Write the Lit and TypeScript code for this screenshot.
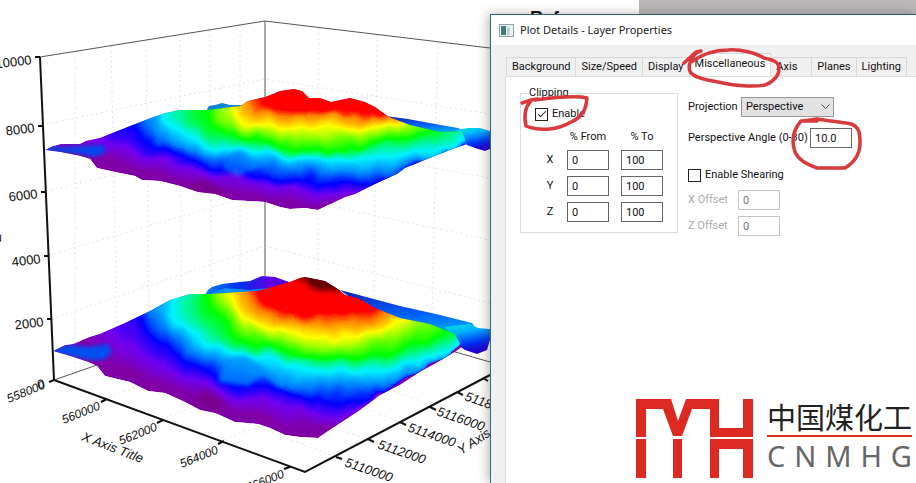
import { LitElement, html, svg, css } from "lit";
import { customElement } from "lit/decorators.js";

type Point = [number, number];
type Rgb = [number, number, number];
interface Level {
  color: Rgb;
  line: Point[];
}

const PURPLE: Rgb = [128, 0, 168];
const VIOLET: Rgb = [112, 0, 240];
const BLUE: Rgb = [0, 0, 255];
const AZURE: Rgb = [0, 128, 255];
const CYAN: Rgb = [0, 240, 255];
const GREEN: Rgb = [0, 255, 0];
const YELLOW: Rgb = [255, 255, 0];
const ORANGE: Rgb = [255, 128, 0];
const RED: Rgb = [255, 0, 0];
const MAROON: Rgb = [100, 0, 0];

// Elevation lines of each surface, from the lowest to the highest, left to right.
const upperLevels: Level[] = [
  { color: PURPLE, line: [[60, 148], [100, 160], [150, 174], [200, 188], [240, 196], [280, 203], [320, 208], [345, 203], [360, 198], [500, 130]] },
  { color: VIOLET, line: [[90, 138], [115, 148], [150, 158], [200, 173], [240, 181], [280, 186], [320, 193], [345, 196], [368, 190], [500, 130]] },
  { color: BLUE, line: [[126, 124], [142, 140], [167, 151], [200, 165], [240, 173], [280, 178], [320, 184], [350, 186], [385, 182], [500, 130]] },
  { color: AZURE, line: [[142, 118], [155, 134], [175, 146], [205, 156], [240, 160], [280, 166], [320, 172], [360, 174], [415, 166], [500, 128]] },
  { color: CYAN, line: [[164, 108], [160, 120], [182, 134], [215, 149], [240, 150], [290, 157], [330, 160], [370, 161], [450, 149], [500, 124]] },
  { color: GREEN, line: [[206, 100], [203, 116], [215, 128], [235, 139], [265, 144], [310, 150], [350, 151], [395, 143], [438, 130], [450, 118]] },
  { color: YELLOW, line: [[230, 100], [233, 112], [238, 120], [248, 126], [270, 127], [310, 130], [350, 129], [385, 126], [405, 121], [412, 112]] },
  { color: ORANGE, line: [[246, 96], [248, 105], [256, 111], [270, 114], [290, 116], [320, 117], [350, 117], [375, 117], [392, 117], [400, 110]] },
  { color: RED, line: [[258, 92], [260, 102], [268, 107], [285, 109], [305, 111], [325, 112], [350, 111], [370, 111], [384, 112], [390, 108]] },
];

const lowerLevels: Level[] = [
  { color: PURPLE, line: [[80, 342], [105, 362], [150, 380], [200, 400], [240, 413], [280, 424], [310, 430], [335, 424], [352, 415], [500, 318]] },
  { color: VIOLET, line: [[110, 328], [125, 346], [150, 363], [200, 385], [240, 399], [270, 402], [300, 410], [330, 417], [362, 408], [500, 318]] },
  { color: BLUE, line: [[130, 316], [150, 338], [177, 354], [210, 375], [240, 387], [280, 388], [310, 400], [340, 405], [382, 395], [500, 318]] },
  { color: AZURE, line: [[144, 308], [160, 328], [185, 344], [210, 360], [230, 366], [260, 376], [300, 386], [350, 391], [415, 377], [500, 318]] },
  { color: CYAN, line: [[176, 290], [164, 313], [188, 330], [212, 345], [240, 353], [280, 363], [320, 374], [370, 374], [450, 354], [500, 316]] },
  { color: GREEN, line: [[208, 285], [205, 305], [219, 324], [240, 340], [270, 349], [310, 359], [360, 359], [415, 345], [448, 334], [456, 320]] },
  { color: YELLOW, line: [[228, 286], [230, 303], [240, 316], [255, 325], [285, 333], [320, 338], [360, 336], [392, 328], [412, 318], [420, 308]] },
  { color: ORANGE, line: [[246, 286], [249, 300], [260, 311], [280, 319], [305, 324], [335, 325], [360, 322], [380, 317], [395, 310], [400, 302]] },
  { color: RED, line: [[256, 284], [261, 300], [270, 307], [290, 313], [310, 317], [335, 317], [355, 316], [370, 311], [380, 305], [384, 298]] },
  { color: RED, line: [[288, 273], [290, 282], [297, 289], [306, 293], [318, 295], [328, 295], [338, 296], [344, 293], [348, 288], [350, 284]] },
  { color: MAROON, line: [[296, 270], [298, 275], [302, 279], [308, 282], [316, 284], [323, 285], [330, 286], [335, 286], [340, 284], [342, 282]] },
];

const STEPS = 10;

function bandPath(line: Point[], top: number): string {
  const first = line[0];
  const last = line[line.length - 1];
  let d = `M${first[0]} ${top}L${first[0]} ${first[1]}`;
  for (let i = 1; i < line.length - 1; i++) {
    const [x, y] = line[i];
    const next = line[i + 1];
    d += `Q${x} ${y} ${(x + next[0]) / 2} ${(y + next[1]) / 2}`;
  }
  return `${d}L${last[0]} ${last[1]}L${last[0]} ${top}Z`;
}

function bands(levels: Level[], top: number) {
  const out = [];
  for (let i = 0; i < levels.length - 1; i++) {
    for (let s = 0; s < STEPS; s++) {
      const t = s / STEPS;
      const mix = (a: number, b: number) => a + (b - a) * t;
      const color = levels[i].color.map((c, k) => Math.round(mix(c, levels[i + 1].color[k])));
      const line = levels[i].line.map(
        (p, k): Point => [mix(p[0], levels[i + 1].line[k][0]), mix(p[1], levels[i + 1].line[k][1])],
      );
      out.push(svg`<path d=${bandPath(line, top)} fill="rgb(${color.join(",")})"/>`);
    }
  }
  const peak = levels[levels.length - 1];
  out.push(svg`<path d=${bandPath(peak.line, top)} fill="rgb(${peak.color.join(",")})"/>`);
  return out;
}

const UPPER =
  "M45 150L53 146L62 144L80 144L86 141L100 138L125 128L148 119L165 113L180 110L207 110L240 106L248 101L265 97L273 94L280 91L294 89L302 91L309 98L320 98L331 102L350 98L365 102L375 107L389 117L410 125L440 132L462 131L467 144L450 150L430 158L405 168L397 174L375 184L355 194L345 197L318 210L305 208L290 209L280 207L265 202L232 200L215 194L198 192L180 186L160 181L142 180L135 176L115 172L97 168L90 159L80 156L60 152Z";
const LOWER =
  "M53 351L65 345L73 344L90 337L100 334L125 323L150 311L170 300L190 294L210 294L240 292L258 291L275 286L290 282L300 278L305 277L325 281L338 289L345 295L360 299L375 308L400 318L430 324L455 334L462 347L455 352L440 361L420 372L400 385L380 395L360 410L340 423L318 438L300 437L285 435L270 428L258 424L235 422L215 413L200 410L185 402L165 393L148 391L130 382L105 376L97 366L88 362L70 356Z";

const GRID =
  "M42 125L265 79L490 114M46 191L265 138L490 178M49 255L265 192L490 240M52 319L265 246L490 303" +
  "M75 52V369M111 46L118 378M146 40L150 392M180 35L182 402M210 30L212 412M240 25V290" +
  "M319 28L317 439M377 35L373 400M438 42L431 366M104 398L305 329M161 419L372 345M220 441L437 360M335 457L100 365M368 440L140 350M400 422L180 335M432 406L220 320";

@customElement("surface-plot")
export class SurfacePlot extends LitElement {
  static styles = css`
    :host { display: block; }
    .plot { display: block; width: 490px; height: 483px; }
    .grid { fill: none; stroke: #e4e4e4; stroke-width: 1; stroke-dasharray: 2 3; }
    .frame { fill: none; stroke: #555; stroke-width: 1; }
    .axis { fill: none; stroke: #111; stroke-width: 2; }
    .text { font-family: "Liberation Sans", Arial, sans-serif; font-size: 13px; fill: #111; }
    .flat { font-family: "Liberation Sans", Arial, sans-serif; font-size: 12px; font-style: italic; fill: #111; }
    .wide { font-size: 13px; }
  `;

  render() {
    const zLabels: [string, number, number][] = [
      ["10000", 32, 64], ["8000", 35, 132], ["6000", 38, 198], ["4000", 41, 263], ["2000", 44, 326],
    ];
    const xLabels: [string, number, number][] = [
      ["558000", 46, 388], ["560000", 101, 409], ["562000", 158, 430], ["564000", 219, 453], ["566000", 285, 477],
    ];
    const yLabels: [string, number, number][] = [
      ["5118000", 464, 400], ["5116000", 436, 415], ["5114000", 407, 431], ["5112000", 377, 448], ["5110000", 344, 466],
    ];
    return html`
      <svg class="plot" viewBox="0 0 490 483" role="img" aria-label="3D surface plot">
        <defs>
          <clipPath id="upper"><path d=${UPPER} /></clipPath>
          <clipPath id="lower"><path d=${LOWER} /></clipPath>
          <filter id="relief" x="-5%" y="-5%" width="110%" height="110%">
            <feTurbulence type="fractalNoise" baseFrequency="0.04 0.03" numOctaves="2" seed="4" />
            <feDisplacementMap in="SourceGraphic" scale="14" xChannelSelector="R" yChannelSelector="G" />
          </filter>
          <filter id="soft"><feGaussianBlur stdDeviation="2" /></filter>
          <linearGradient id="strip" x1="0" y1="0" x2="0.15" y2="1">
            <stop offset="0" stop-color="#1020b0" /><stop offset="0.5" stop-color="#0060ff" /><stop offset="1" stop-color="#00c8ff" />
          </linearGradient>
          <linearGradient id="corner" x1="0" y1="0" x2="0.3" y2="1">
            <stop offset="0" stop-color="#00e8d8" /><stop offset="0.35" stop-color="#00b0ff" /><stop offset="0.75" stop-color="#0030f0" /><stop offset="1" stop-color="#2000d0" />
          </linearGradient>
          <linearGradient id="back" x1="0" y1="0" x2="1" y2="0">
            <stop offset="0" stop-color="#0080f0" /><stop offset="0.4" stop-color="#0030f0" /><stop offset="0.75" stop-color="#6000e0" /><stop offset="1" stop-color="#4010e0" />
          </linearGradient>
        </defs>

        <path class="grid" d=${GRID} />
        <path class="frame" d="M40 57L265 21L490 48M265 21V280M54 380L100 364M452 351L490 362" />

        <path d="M206 111L209 106L215 105L222 103L230 105L245 105L245 112Z" fill="#0a86d8" />
        <path d="M385 116L408 119L435 124L458 128L470 134L455 136L420 130Z" fill="url(#strip)" />
        <path d="M457 130L468 128L480 128L490 131V149L485 151L478 149L467 145L462 138Z" fill="url(#corner)" />
        <g clip-path="url(#upper)">
          <path d=${UPPER} fill="#8000a8" />
          <g filter="url(#relief)">${bands(upperLevels, 60)}</g>
          <path d="M40 150L52 146L64 147L82 146L103 145L106 152L95 157L80 154Z" fill="#0048f0" filter="url(#soft)" />
          <path d="M222 168L232 154L243 153L262 165L238 176Z" fill="#0090ff" opacity="0.6" filter="url(#soft)" />
          <path d="M180 188L205 180L225 190L212 200Z" fill="#780088" opacity="0.7" filter="url(#soft)" />
        </g>

        <path d="M205 295L208 290L212 287L222 284L240 282L250 281L262 276L275 277L292 283L280 293L255 295Z" fill="url(#back)" />
        <path d="M212 293L225 288L250 290L268 288L258 296L212 296Z" fill="#0090f0" />
        <path d="M340 290L370 298L400 306L440 315L472 323L480 335L462 346L430 332L400 324L370 312Z" fill="url(#strip)" />
        <path d="M445 327L470 324L478 328L490 329V340L487 350L477 354L465 350L455 343Z" fill="url(#corner)" />
        <g clip-path="url(#lower)">
          <path d=${LOWER} fill="#8000a8" />
          <g filter="url(#relief)">${bands(lowerLevels, 240)}</g>
          <path d="M50 352L62 346L72 345L88 347L108 344L112 352L104 360L90 360Z" fill="#0050f0" filter="url(#soft)" />
          <path d="M218 382L226 358L246 356L268 372L248 386L238 384Z" fill="#0090ff" opacity="0.7" filter="url(#soft)" />
          <path d="M190 402L205 390L225 402L212 414Z" fill="#780088" opacity="0.7" filter="url(#soft)" />
        </g>

        <path class="axis" d="M40 57L54 380L305 472L490 375M35 57H40M38 126H43M41 192H46M44 256H49M47 319H52M49 382L54 380M101 402L107 399M157 423L163 420M218 444L224 441M284 469L290 467M336 457L342 459M368 439L374 442M400 422L406 425M430 407L436 410M457 392L463 395M483 378L488 381" />
        ${zLabels.map(([t, x, y]) => svg`<text class="text" text-anchor="end" transform="translate(${x} ${y}) rotate(-7)">${t}</text>`)}
        ${xLabels.map(([t, x, y]) => svg`<text class="flat" text-anchor="end" transform="translate(${x} ${y}) rotate(-22)">${t}</text>`)}
        <text class="text" text-anchor="end" transform="translate(45 388) rotate(-7)">0</text>
        ${yLabels.map(([t, x, y]) => svg`<text class="flat wide" transform="translate(${x} ${y}) rotate(19)">${t}</text>`)}
        <text class="flat wide" transform="translate(81 440) rotate(21)">X Axis Title</text>
        <text class="flat wide" transform="translate(461 455) rotate(-33)">Y Axis Title</text>
        <text class="text" transform="translate(1 238) rotate(-90)" text-anchor="middle">Z</text>
      </svg>
    `;
  }
}

@customElement("layer-dialog")
export class LayerDialog extends LitElement {
  static styles = css`
    :host {
      display: flex; flex-direction: column; position: relative; box-sizing: border-box;
      border-top: 1px solid #2c5f7c; border-left: 1px solid #2c6a8c; background: #f0f0f0;
      box-shadow: -2px 0 10px rgba(70, 40, 30, 0.35);
      font: 11px/14px Roboto, "Liberation Sans", Arial, sans-serif; color: #111;
    }
    .caption { display: flex; align-items: center; gap: 6px; height: 30px; padding-left: 8px; background: #fff; font: 11px/16px "Noto Sans", "Open Sans", sans-serif; color: #222; }
    .tabs { display: flex; align-items: flex-end; height: 31px; padding-left: 15px; }
    .tab { min-width: 41px; height: 19px; padding: 0 5px; border: 1px solid #d9d9d9; border-bottom: 0; border-left-width: 0; background: #f0f0f0; font: inherit; color: inherit; text-align: left; white-space: nowrap; }
    .tab:first-child { border-left-width: 1px; }
    .tab.active { height: 23px; padding-bottom: 2px; background: #fff; }
    .panel { flex: 1; display: flex; align-items: flex-start; gap: 10px; margin-left: 14px; padding: 9px 0 0 14px; border: solid #dcdcdc; border-width: 1px 0 0 1px; background: #fff; }
    .clipping { box-sizing: border-box; width: 158px; min-width: 0; margin: 0; padding: 6px 12px 7px; border: 1px solid #dcdcdc; }
    .legend { padding: 0; margin-left: -4px; }
    .check { display: flex; align-items: center; gap: 4px; height: 16px; padding-left: 2px; }
    .check.flush { padding-left: 0; height: 14px; margin: 20px 0 8px; }
    .box { appearance: none; flex: none; width: 13px; height: 13px; margin: 0; border: 1px solid #222; background: #fff; display: grid; place-items: center; }
    .box:checked::before { content: ""; width: 7px; height: 3px; border: solid #222; border-width: 0 0 1px 1px; transform: translateY(-1px) rotate(-45deg); }
    .range { border-collapse: separate; border-spacing: 0; margin-top: 5px; }
    .range th { height: 20px; padding: 0; font-weight: normal; text-align: center; }
    .range th.from { padding-right: 12px; }
    .range tr > :first-child { width: 34px; }
    .range td { height: 20px; padding: 3px 12px 3px 0; }
    .range td:last-child { padding-right: 0; }
    .field { box-sizing: border-box; display: block; width: 42px; height: 20px; margin: 0; padding: 0 4px; border: 1px solid #666; background: #fff; color: #111; font: inherit; }
    .field:disabled { border-color: #c4c4c4; color: #777; }
    .view { padding-top: 11px; }
    .row { display: flex; align-items: center; gap: 6px; height: 20px; white-space: nowrap; }
    .row + .row { margin-top: 6px; }
    .row.angle { margin-top: 11px; }
    .name { width: 47px; }
    .angle-name { width: 116px; }
    .dim { width: 44px; color: #aaa; }
    .picker { position: relative; display: flex; align-items: center; }
    .select { appearance: none; width: 93px; height: 20px; padding: 0 4px; border: 1px solid #999; border-radius: 0; background: #e2e2e2; color: #111; font: inherit; }
    .chevron { position: absolute; right: 4px; pointer-events: none; }
    .marks { position: absolute; top: 0; left: 0; width: 424px; height: 240px; pointer-events: none; }
  `;

  private tabs = ["Background", "Size/Speed", "Display", "Miscellaneous", "Axis", "Planes", "Lighting"];

  render() {
    const clip = [["X", "0", "100"], ["Y", "0", "100"], ["Z", "0", "100"]];
    return html`
      <header class="caption">
        <svg width="15" height="13" viewBox="0 0 15 13" aria-hidden="true">
          <rect x="0.5" y="0.5" width="14" height="12" fill="#eef3f3" stroke="#93a3a6" />
          <rect x="2" y="2" width="5" height="9" fill="#3f7f7a" />
          <rect x="8" y="3" width="3" height="8" fill="#c6d2d2" />
        </svg>
        <span>Plot Details - Layer Properties</span>
      </header>
      <nav class="tabs" role="tablist">
        ${this.tabs.map((t) => html`<button class="tab ${t === "Miscellaneous" ? "active" : ""}" role="tab">${t}</button>`)}
      </nav>
      <section class="panel">
        <fieldset class="clipping">
          <legend class="legend">Clipping</legend>
          <label class="check"><input class="box" type="checkbox" checked />Enable</label>
          <table class="range">
            <thead><tr><th></th><th class="from" scope="col">% From</th><th scope="col">% To</th></tr></thead>
            <tbody>
              ${clip.map(([axis, from, to]) => html`
                <tr>
                  <th scope="row">${axis}</th>
                  <td><input class="field" aria-label="${axis} from" .value=${from} /></td>
                  <td><input class="field" aria-label="${axis} to" .value=${to} /></td>
                </tr>`)}
            </tbody>
          </table>
        </fieldset>
        <div class="view">
          <div class="row">
            <label class="name" for="projection">Projection</label>
            <span class="picker">
              <select class="select" id="projection"><option>Perspective</option><option>Orthographic</option></select>
              <svg class="chevron" width="9" height="6" viewBox="0 0 9 6" aria-hidden="true"><path d="M0.5 0.5L4.5 4.5L8.5 0.5" fill="none" stroke="#444" /></svg>
            </span>
          </div>
          <div class="row angle">
            <label class="angle-name" for="angle">Perspective Angle (0-30)</label>
            <input class="field" id="angle" value="10.0" />
          </div>
          <label class="check flush"><input class="box" type="checkbox" />Enable Shearing</label>
          <div class="row"><label class="dim" for="xo">X Offset</label><input class="field" id="xo" value="0" disabled /></div>
          <div class="row"><label class="dim" for="zo">Z Offset</label><input class="field" id="zo" value="0" disabled /></div>
        </div>
      </section>
      <svg class="marks" viewBox="491 15 424 240" aria-hidden="true">
        <g fill="none" stroke="#d93a3e" stroke-width="3.5" stroke-linecap="round" stroke-linejoin="round">
          <path d="M684 63L696 52L701 51M700 51C690 56 687 68 691 73C696 78 706 80 718 82C734 86 754 87 765 85C773 82 779 76 779 69C779 62 774 60 764 58C756 53 741 49 728 50C714 50 701 55 691 62" />
          <path d="M522 103L531 100L537 99M535 100C550 98 575 95 587 98C586 109 583 117 571 122C556 131 538 131 526 126C524 117 525 107 531 101" />
          <path d="M817 121L801 121C794 129 791 140 795 152C799 161 808 165 817 168L845 168C855 162 860 153 860 143C860 132 859 127 851 124C840 122 829 121 817 119L803 121" />
        </g>
      </svg>
    `;
  }
}

@customElement("app-root")
export class AppRoot extends LitElement {
  static styles = css`
    :host { display: block; }
    .desktop { position: relative; display: flex; min-height: 100vh; overflow: hidden; background: #fff; }
    .plot { flex: none; }
    .dialog { flex: 1; min-width: 0; margin-top: 14px; }
    .behind { position: absolute; top: 0; right: 0; left: 639px; height: 20px; background: #b9b7b8; }
    .note { position: absolute; top: 8px; left: 530px; font: bold 18px/20px "Liberation Sans", Arial, sans-serif; color: #111; }
    .brand { position: absolute; right: 4px; bottom: 4px; display: flex; align-items: center; gap: 14px; }
    .names { display: flex; flex-direction: column; padding-bottom: 4px; }
    .cn { border-bottom: 2px solid #dc2a22; font: 29px/38px "Noto Sans CJK SC", sans-serif; color: #222; white-space: nowrap; }
    .en { display: flex; justify-content: space-between; font: 29px/38px "Noto Sans", sans-serif; color: #666; }
  `;

  render() {
    return html`
      <main class="desktop">
        <div class="behind"></div>
        <span class="note">Ref</span>
        <surface-plot class="plot"></surface-plot>
        <layer-dialog class="dialog"></layer-dialog>
        <div class="brand">
          <svg width="117" height="81" viewBox="0 0 117 81" aria-hidden="true">
            <g fill="#dc2a22">
              <path d="M0 1H35L42 23L50 1H83V30H107V1H117V39H74V11H56L46 38H37L27 11H10V39H0Z" />
              <path d="M0 41H10V80H0ZM37 41H46V80H37ZM74 41H117V80H107V51H83V80H74Z" />
            </g>
          </svg>
          <div class="names">
            <span class="cn">中国煤化工</span>
            <span class="en" aria-label="CNMHG">${[..."CNMHG"].map((c) => html`<span>${c}</span>`)}</span>
          </div>
        </div>
      </main>
    `;
  }
}
